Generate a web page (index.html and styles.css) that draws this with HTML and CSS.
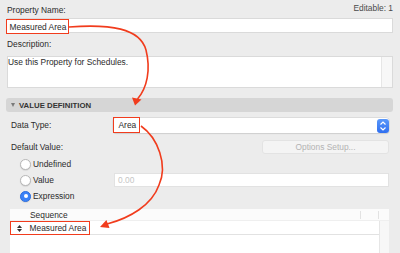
FILE: index.html
```html
<!DOCTYPE html>
<html lang="en">

<head>
  <meta charset="UTF-8">
  <meta name="viewport" content="width=device-width, initial-scale=1.0">
  <title>Property Settings</title>
  <link rel="stylesheet" href="styles.css">
</head>

<body>
  <div class="panel">
    <div class="top-row">
      <span class="field-label">Property Name:</span>
      <span class="editable">Editable: 1</span>
    </div>
    <div class="text-field name-field">
      <span class="mark name-mark">Measured Area</span>
    </div>

    <div class="field-label desc-label">Description:</div>
    <div class="text-area">
      <span class="area-text">Use this Property for Schedules.</span>
      <div class="scroll-track"></div>
    </div>

    <div class="section-head"><span class="disclosure"></span>VALUE DEFINITION</div>

    <div class="row data-type-row">
      <span class="row-label">Data Type:</span>
      <div class="popup">
        <span class="mark popup-mark">Area</span>
        <span class="stepper">
          <svg width="12" height="14" viewBox="0 0 12 14">
            <polyline points="3.5,5.5 6,3 8.5,5.5" fill="none" stroke="#fff" stroke-width="1.2" />
            <polyline points="3.5,8.5 6,11 8.5,8.5" fill="none" stroke="#fff" stroke-width="1.2" />
          </svg>
        </span>
      </div>
    </div>

    <div class="row default-row">
      <span class="row-label">Default Value:</span>
      <button class="options-btn">Options Setup...</button>
    </div>

    <div class="radio-list">
      <div class="radio-row"><span class="radio"></span>Undefined</div>
      <div class="radio-row"><span class="radio"></span>Value<div class="value-field">0.00</div></div>
      <div class="radio-row"><span class="radio checked"></span>Expression</div>
    </div>

    <div class="table">
      <div class="table-head">
        <span class="col-seq">Sequence</span>
        <span class="col-sep col-a"></span>
        <span class="col-sep col-b"></span>
      </div>
      <div class="table-body">
        <div class="table-rows">
          <div class="table-row">
            <span class="mark row-mark">
              <svg class="order-icon" width="5" height="7" viewBox="0 0 5 7">
                <polygon points="0,3 2.5,0 5,3" fill="#333" />
                <polygon points="0,4 2.5,7 5,4" fill="#333" />
              </svg>
              Measured Area
            </span>
          </div>
        </div>
        <div class="scroll-track"></div>
      </div>
    </div>

    <!-- callout arrows drawn over the dialog -->
    <svg class="arrows" width="400" height="253" viewBox="0 0 400 253">
      <path d="M69,27 C110,24 140,28 146,50 C151,70 147,88 137.5,99" fill="none" stroke="#f13c1d" stroke-width="1.6" />
      <polygon points="135,105.5 132,97.5 141.5,99.5" fill="#f13c1d" />
      <path d="M141,126 C158,138 168,165 159,185 C152,205 130,218 107,224" fill="none" stroke="#f13c1d" stroke-width="1.6" />
      <polygon points="100,227 106.4,220 109.6,228" fill="#f13c1d" />
    </svg>
  </div>
</body>

</html>
```

FILE: styles.css
```css
* {
  box-sizing: border-box;
}

body {
  margin: 0;
  width: 400px;
  height: 253px;
  overflow: hidden;
  background-color: #ececec;
  font-family: 'Liberation Sans', Helvetica, Arial, sans-serif;
  font-size: 8.4px;
  color: #2b2b2b;
}

.panel {
  position: relative;
  height: 253px;
  padding: 0 7px;
}

.top-row {
  display: flex;
  justify-content: space-between;
  height: 18px;
}

.field-label {
  display: block;
  line-height: 11px;
}

.top-row .field-label {
  padding-top: 5px;
}

.editable {
  padding-top: 3px;
  line-height: 11px;
  color: #4a4a4a;
}

.mark {
  border: 1.6px solid #f13c1d;
}

.text-field {
  height: 15px;
  background-color: #fff;
  border: 1px solid #dadada;
  display: flex;
  align-items: flex-start;
}

.name-mark {
  display: flex;
  align-items: center;
  height: 15px;
  margin-left: -2px;
  padding: 0 2px 0 2.5px;
  background-color: #fff;
}

.desc-label {
  margin-top: 6px;
}

.text-area {
  margin-top: 6px;
  height: 32px;
  background-color: #fff;
  border: 1px solid #dadada;
  display: flex;
  justify-content: space-between;
}

.area-text {
  line-height: 11px;
}

.scroll-track {
  width: 11px;
  background-color: #f7f7f7;
  border-left: 1px solid #e6e6e6;
}

.section-head {
  margin: 10px 0 0 -1px;
  height: 14px;
  background-color: #d6d6d6;
  border-radius: 3px;
  display: flex;
  align-items: center;
  padding-left: 5px;
  font-weight: bold;
  font-size: 7.8px;
  color: #333;
}

.disclosure {
  width: 0;
  height: 0;
  border-left: 2.5px solid transparent;
  border-right: 2.5px solid transparent;
  border-top: 4px solid #7a7a7a;
  margin-right: 4px;
}

.row {
  display: flex;
  align-items: center;
}

.row-label {
  width: 106px;
  padding-left: 4px;
}

.data-type-row {
  margin-top: 5px;
  height: 16px;
}

.popup {
  flex: 1;
  align-self: flex-end;
  height: 15px;
  margin-right: 4px;
  background-color: #fff;
  box-shadow: 0 0 0 0.5px #d0d0d0, 0 0.5px 1px rgba(0, 0, 0, 0.12);
  border-radius: 3px;
  display: flex;
  justify-content: space-between;
  align-items: flex-start;
}

.popup-mark {
  display: flex;
  align-items: center;
  height: 16px;
  margin-top: -1px;
  padding: 0 3px 0 4.5px;
}

.stepper {
  width: 12px;
  height: 14px;
  margin-top: 0.5px;
  border-radius: 3px;
  background: linear-gradient(#5a98fa, #2f6ff0);
  display: flex;
}

.default-row {
  margin-top: 7px;
  height: 14px;
}

.options-btn {
  margin-left: auto;
  margin-right: 4px;
  width: 127px;
  height: 14px;
  padding: 0;
  background-color: #f4f4f4;
  border: 1px solid #e3e3e3;
  border-radius: 3px;
  font-family: inherit;
  font-size: 8.4px;
  color: #b3b3b3;
}

.radio-list {
  margin-top: 2px;
}

.radio-row {
  display: flex;
  align-items: center;
  height: 16px;
  padding-left: 13px;
}

.radio {
  width: 11px;
  height: 11px;
  margin-right: 2px;
  border-radius: 50%;
  background-color: #fff;
  border: 0.5px solid #b8b8b8;
  box-shadow: 0 0.5px 1px rgba(0, 0, 0, 0.15);
  display: flex;
  align-items: center;
  justify-content: center;
}

.radio.checked {
  background-color: #3b82f7;
  border-color: #2d6fe0;
}

.radio.checked::after {
  content: "";
  width: 4px;
  height: 4px;
  border-radius: 50%;
  background-color: #fff;
}

.value-field {
  margin-left: auto;
  margin-right: 4px;
  width: 275px;
  height: 14px;
  padding-left: 3px;
  line-height: 12px;
  background-color: #fff;
  border: 1px solid #e2e2e2;
  color: #c6c6c6;
}

.table {
  margin: 5px 4px 0 3px;
  height: 44px;
  background-color: #fff;
}

.table-head {
  height: 12px;
  background-color: #fbfbfb;
  border-bottom: 1px solid #efefef;
  display: flex;
  align-items: center;
}

.col-seq {
  flex: 1;
  padding-left: 20px;
}

.col-sep {
  height: 8px;
  border-left: 1px solid #e2e2e2;
}

.col-a {
  width: 18px;
}

.col-b {
  width: 11px;
}

.table-body {
  display: flex;
  height: 32px;
}

.table-rows {
  flex: 1;
}

.table-row {
  height: 14px;
  border-bottom: 1px solid #e2e2e2;
}

.row-mark {
  display: flex;
  align-items: center;
  width: 80px;
  height: 14px;
  padding-left: 5.5px;
}

.order-icon {
  margin-right: 8px;
}

.table-body .scroll-track {
  width: 10px;
}

.arrows {
  position: absolute;
  top: 0;
  left: 0;
  pointer-events: none;
}
```
